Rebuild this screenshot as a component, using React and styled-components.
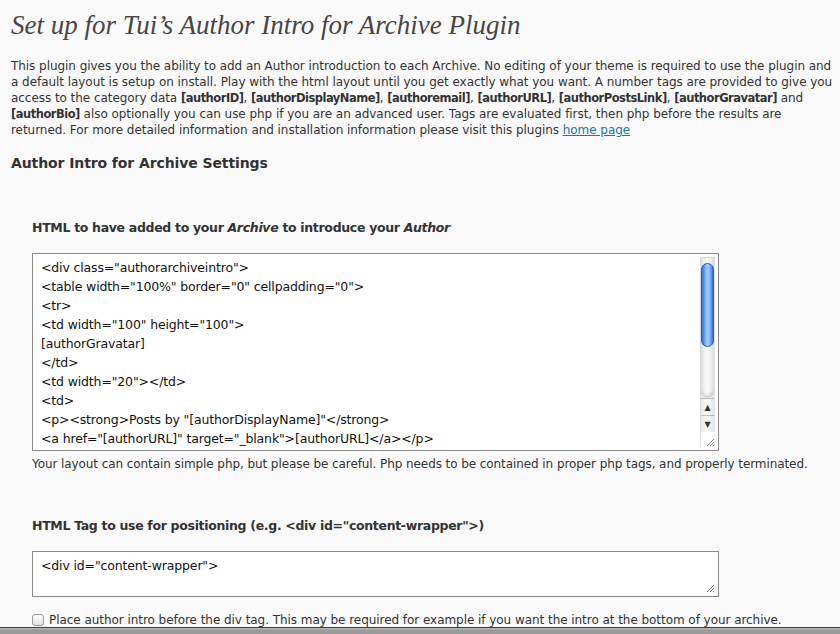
import React from "react";
import styled, { createGlobalStyle } from "styled-components";

/* ================= STYLES ================= */

const GlobalStyle = createGlobalStyle`
  html, body {
    margin: 0;
    padding: 0;
    background: #f9f9f9;
  }
  body {
    font-family: "DejaVu Sans", "Liberation Sans", sans-serif;
    color: #333;
    overflow: hidden;
  }
`;

const Page = styled.div`
  padding: 10px 0 0 11px;
  width: 829px;
`;

const Title = styled.h2`
  margin: 0 0 18px;
  font-family: "Liberation Serif", "DejaVu Serif", serif;
  font-style: italic;
  font-weight: normal;
  font-size: 27px;
  line-height: 30px;
  color: #464646;
`;

const Intro = styled.p`
  margin: 0;
  font-size: 12px;
  line-height: 16px;
  letter-spacing: -0.05px;
  white-space: nowrap;

  b {
    font-weight: bold;
    font-size: 11.5px;
    letter-spacing: -0.5px;
  }

  a {
    color: #21759b;
  }
`;

const SectionTitle = styled.h3`
  margin: 15px 0 0;
  font-size: 14px;
  line-height: 20px;
  font-weight: bold;
  letter-spacing: -0.1px;
  color: #333;
`;

const Field = styled.div`
  padding-left: 21px;
  margin-top: ${({ $top }) => $top}px;
`;

const Label = styled.div`
  font-size: 12.5px;
  line-height: 18px;
  font-weight: bold;
  letter-spacing: -0.32px;
  color: #333;
  margin-bottom: 16px;

  em {
    font-style: italic;
  }
`;

const TextBox = styled.div`
  position: relative;
  display: flex;
  width: 687px;
  height: ${({ $height }) => $height}px;
  border: 1px solid #8a8a8a;
  background: #fff;
  box-sizing: border-box;
  overflow: hidden;
`;

const Code = styled.div`
  flex: 1;
  padding: 4px 8px 0;
  font-size: 12.5px;
  line-height: 19px;
  letter-spacing: -0.15px;
  color: #111;
  white-space: pre;
  overflow: hidden;
`;

const Scrollbar = styled.div`
  display: flex;
  flex-direction: column;
  width: 15px;
  margin: 3px 3px 3px 0;
  border: 1px solid #d8d8d8;
  border-right-color: #e4e4e4;
  box-sizing: border-box;
  background: linear-gradient(to right, #e6e6e6, #fafafa 50%, #e2e2e2);
`;

const Track = styled.div`
  flex: 1;
  padding: 5px 0 0;
  border-bottom-left-radius: 7px;
  border-bottom-right-radius: 7px;
  box-shadow: inset 0 -3px 3px rgba(0, 0, 0, 0.12);
`;

const Thumb = styled.div`
  width: 13px;
  height: 84px;
  box-sizing: border-box;
  border-radius: 7px;
  border: 1px solid #2a57b8;
  background: linear-gradient(
    to right,
    #2d6fd8,
    #8ab8f4 35%,
    #a9cdfa 55%,
    #5e98ea 85%,
    #2f68cf
  );
`;

const Arrow = styled.div`
  height: 16px;
  border-top: 1px solid #bbb;
  display: flex;
  align-items: center;
  justify-content: center;
  font-size: 8px;
  color: #333;
  background: linear-gradient(to right, #e8e8e8, #fbfbfb 50%, #e4e4e4);
`;

const Corner = styled.div`
  height: 15px;
  background: #fff;
  border-left: 1px solid #e0e0e0;
  margin: 0 -1px -1px -1px;
`;

const Grip = styled.svg`
  position: absolute;
  right: 3px;
  bottom: 3px;
`;

const Help = styled.div`
  margin-top: 4px;
  font-size: 12px;
  line-height: 18px;
  letter-spacing: -0.08px;
`;

const CheckRow = styled.label`
  display: flex;
  align-items: center;
  gap: 5px;
  margin-top: 14px;
  font-size: 12px;
  line-height: 18px;
  letter-spacing: -0.05px;
  white-space: nowrap;
`;

const Box = styled.span`
  width: 12px;
  height: 12px;
  box-sizing: border-box;
  border: 1px solid #9a9a9a;
  border-radius: 3px;
  background: linear-gradient(to bottom, #fdfdfd, #e4e4e4);
`;

const BottomBar = styled.div`
  position: fixed;
  left: 0;
  right: 0;
  bottom: 0;
  height: 6px;
  border-top: 1px solid #3a3a3a;
  background: linear-gradient(to bottom, #c4c4c4, #9b9b9b 30%, #999);
`;

/* ================= COMPONENT ================= */

const layoutCode = [
  '<div class="authorarchiveintro">',
  '<table width="100%" border="0" cellpadding="0">',
  "<tr>",
  '<td width="100" height="100">',
  "[authorGravatar]",
  "</td>",
  '<td width="20"></td>',
  "<td>",
  '<p><strong>Posts by "[authorDisplayName]"</strong>',
  '<a href="[authorURL]" target="_blank">[authorURL]</a></p>',
];

function ResizeGrip() {
  return (
    <Grip width="9" height="9" viewBox="0 0 9 9">
      <path d="M1 8 L8 1 M4 8 L8 4 M7 8 L8 7" stroke="#8a8a8a" strokeWidth="1" />
    </Grip>
  );
}

function App() {
  return (
    <>
      <GlobalStyle />
      <Page>
        <Title>Set up for Tui’s Author Intro for Archive Plugin</Title>

        <Intro>
          This plugin gives you the ability to add an Author introduction to each Archive. No editing of your theme is required to use the plugin and
          <br />
          a default layout is setup on install. Play with the html layout until you get exactly what you want. A number tags are provided to give you
          <br />
          access to the category data <b>[authorID]</b>, <b>[authorDisplayName]</b>, <b>[authoremail]</b>, <b>[authorURL]</b>, <b>[authorPostsLink]</b>, <b>[authorGravatar]</b> and
          <br />
          <b>[authorBio]</b> also optionally you can use php if you are an advanced user. Tags are evaluated first, then php before the results are
          <br />
          returned. For more detailed information and installation information please visit this plugins <a href="#home">home page</a>
        </Intro>

        <SectionTitle>Author Intro for Archive Settings</SectionTitle>

        <Field $top={46}>
          <Label>
            HTML to have added to your <em>Archive</em> to introduce your <em>Author</em>
          </Label>
          <TextBox $height={198}>
            <Code>{layoutCode.join("\n")}</Code>
            <Scrollbar>
              <Track>
                <Thumb />
              </Track>
              <Arrow>▲</Arrow>
              <Arrow>▼</Arrow>
              <Corner />
            </Scrollbar>
            <ResizeGrip />
          </TextBox>
          <Help>
            Your layout can contain simple php, but please be careful. Php needs to be contained in proper php tags, and properly terminated.
          </Help>
        </Field>

        <Field $top={44}>
          <Label>HTML Tag to use for positioning (e.g. &lt;div id="content-wrapper"&gt;)</Label>
          <TextBox $height={46}>
            <Code>{'<div id="content-wrapper">'}</Code>
            <ResizeGrip />
          </TextBox>
          <CheckRow>
            <Box />
            Place author intro before the div tag. This may be required for example if you want the intro at the bottom of your archive.
          </CheckRow>
        </Field>
      </Page>
      <BottomBar />
    </>
  );
}

export default App;
